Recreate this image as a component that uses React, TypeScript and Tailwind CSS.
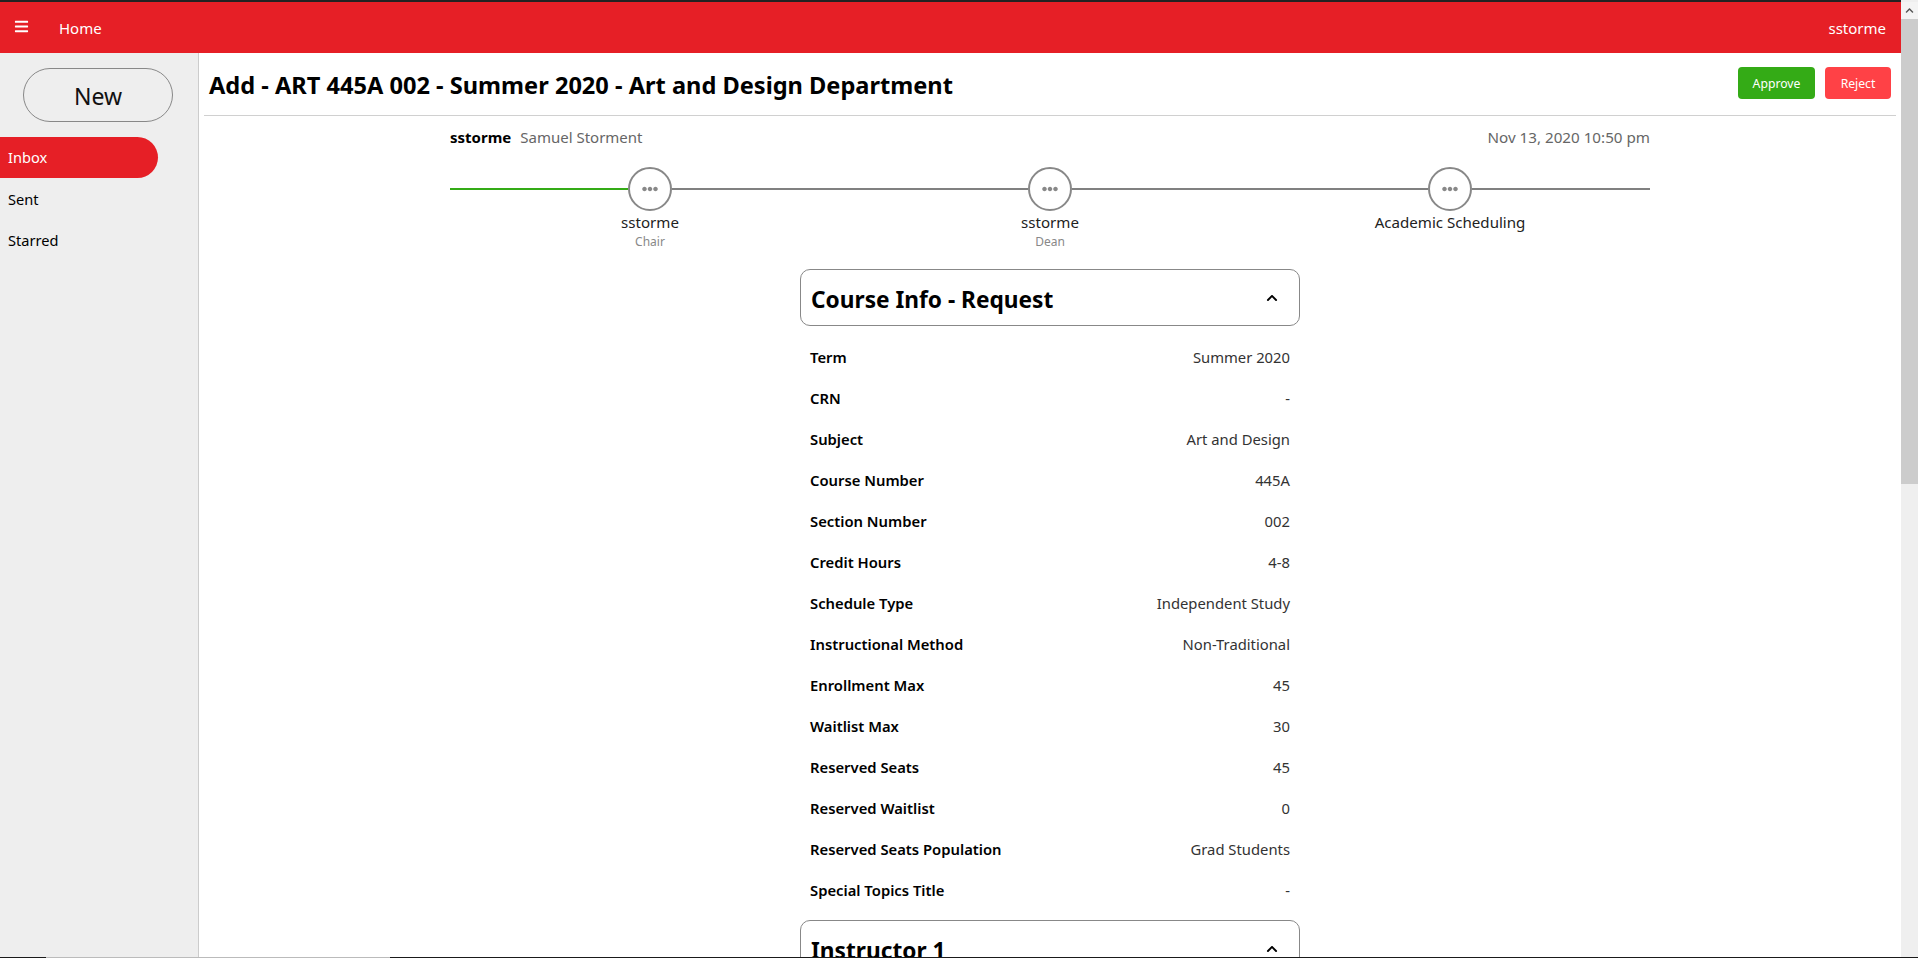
import { FaBars, FaChevronUp, FaEllipsisH } from 'react-icons/fa'

const courseRows = [
  ['Term', 'Summer 2020'],
  ['CRN', '-'],
  ['Subject', 'Art and Design'],
  ['Course Number', '445A'],
  ['Section Number', '002'],
  ['Credit Hours', '4-8'],
  ['Schedule Type', 'Independent Study'],
  ['Instructional Method', 'Non-Traditional'],
  ['Enrollment Max', '45'],
  ['Waitlist Max', '30'],
  ['Reserved Seats', '45'],
  ['Reserved Waitlist', '0'],
  ['Reserved Seats Population', 'Grad Students'],
  ['Special Topics Title', '-'],
]

const steps = [
  { name: 'sstorme', role: 'Chair', done: true },
  { name: 'sstorme', role: 'Dean', done: false },
  { name: 'Academic Scheduling', role: '', done: false },
]

function SectionHeader({ title }: { title: string }) {
  return (
    <div className="flex h-[57px] w-[500px] shrink-0 items-center justify-between rounded-[10px] border border-[#888] pl-[10px] pr-[21px]">
      <h2 className="pt-[5px] text-[22.7px] font-bold leading-none text-black">{title}</h2>
      <FaChevronUp className="text-[12px] text-black" />
    </div>
  )
}

function Step({ name, role, done }: { name: string; role: string; done: boolean }) {
  return (
    <div className="flex w-[400px] flex-col items-center">
      <div className="flex h-[44px] w-full items-center">
        <div className={done ? 'h-[2px] flex-1 bg-[#34ab16]' : 'h-[2px] flex-1 bg-[#808080]'} />
        <div className="flex h-[44px] w-[44px] items-center justify-center rounded-full border-2 border-[#888] bg-white">
          <FaEllipsisH className="text-[16px] text-[#888]" />
        </div>
        <div className="h-[2px] flex-1 bg-[#808080]" />
      </div>
      <div className="text-[15.1px] leading-[22px] text-[#222]">{name}</div>
      <div className="text-[12px] leading-[17px] text-[#888]">{role}</div>
    </div>
  )
}

export default function App() {
  return (
    <div className="relative flex h-[958px] w-[1918px] overflow-hidden bg-white font-['Noto_Sans','Open_Sans',sans-serif]">
      <div className="flex min-w-0 flex-1 flex-col">
        <div className="h-[2px] shrink-0 bg-[#222]" />
        <header className="flex h-[51px] shrink-0 items-center bg-[#e61f26] pt-[1px] text-white">
          <FaBars className="ml-[14px] text-[15px] -translate-y-[2px]" />
          <span className="ml-[30px] text-[15px]">Home</span>
          <span className="ml-auto mr-[15px] text-[15px]">sstorme</span>
        </header>

        <div className="flex min-h-0 flex-1">
          <aside className="w-[199px] shrink-0 border-r border-[#ccc] bg-[#eee]">
            <button className="ml-[23px] mt-[15px] block h-[54px] w-[150px] rounded-[27px] border border-[#888] pt-[3px] text-[23px] text-[#111]">
              New
            </button>
            <nav className="mt-[15px] text-[14.6px]">
              <div className="flex h-[41px] w-[158px] items-center rounded-r-[21px] bg-[#e61f26] pl-2 pt-[1px] text-white">Inbox</div>
              <div className="flex h-[41px] items-center pl-2 pt-[2px] text-black">Sent</div>
              <div className="flex h-[41px] items-center pl-2 pt-[2px] text-black">Starred</div>
            </nav>
          </aside>

          <main className="min-w-0 flex-1 overflow-hidden">
            <div className="mx-[5px] flex h-[63px] items-center justify-between border-b border-[#d0d0d0] pl-[5px] pr-[5px]">
              <h1 className="pt-[4px] text-[23.6px] font-bold text-black">
                Add - ART 445A 002 - Summer 2020 - Art and Design Department
              </h1>
              <div className="flex gap-[10px] pb-[3px]">
                <button className="h-[32px] w-[77px] rounded-[4px] bg-[#34ab16] pt-[4px] text-[12.2px] text-white">Approve</button>
                <button className="h-[32px] w-[66px] rounded-[4px] bg-[#ff4146] pt-[4px] text-[12.2px] text-white">Reject</button>
              </div>
            </div>

            <div className="mx-auto flex w-[1200px] flex-col items-center">
              <div className="flex h-[42px] w-full items-center justify-between text-[15px]">
                <div>
                  <span className="font-bold text-black">sstorme</span>
                  <span className="ml-[9px] text-[#666]">Samuel Storment</span>
                </div>
                <span className="text-[15.2px] text-[#666]">Nov 13, 2020 10:50 pm</span>
              </div>

              <div className="mt-[9px] flex w-full">
                {steps.map((s, i) => (
                  <Step key={i} name={s.name} role={s.role} done={s.done} />
                ))}
              </div>

              <div className="mt-[19px]">
                <SectionHeader title="Course Info - Request" />
              </div>

              <dl className="mt-[11px] w-[480px]">
                {courseRows.map(([label, value]) => (
                  <div key={label} className="flex h-[41px] items-center justify-between text-[14.8px]">
                    <dt className="font-semibold text-black">{label}</dt>
                    <dd className="text-[#333]">{value}</dd>
                  </div>
                ))}
              </dl>

              <div className="mt-[9px]">
                <SectionHeader title="Instructor 1" />
              </div>
            </div>
          </main>
        </div>
      </div>

      {/* fake browser scrollbar */}
      <div className="flex w-[17px] shrink-0 flex-col bg-[#efefef] pt-[2px]">
        <div className="flex h-[17px] items-center justify-center bg-[#f4f4f4]">
          <FaChevronUp className="text-[9px] text-[#555]" />
        </div>
        <div className="h-[465px] bg-[#cccccc]" />
      </div>

      {/* window edge at the bottom of the capture */}
      <div className="absolute bottom-0 left-0 flex h-[1px] w-full bg-[#1a1a1a]">
        <div className="ml-[46px] w-[344px] bg-[#bbb]" />
      </div>
    </div>
  )
}
